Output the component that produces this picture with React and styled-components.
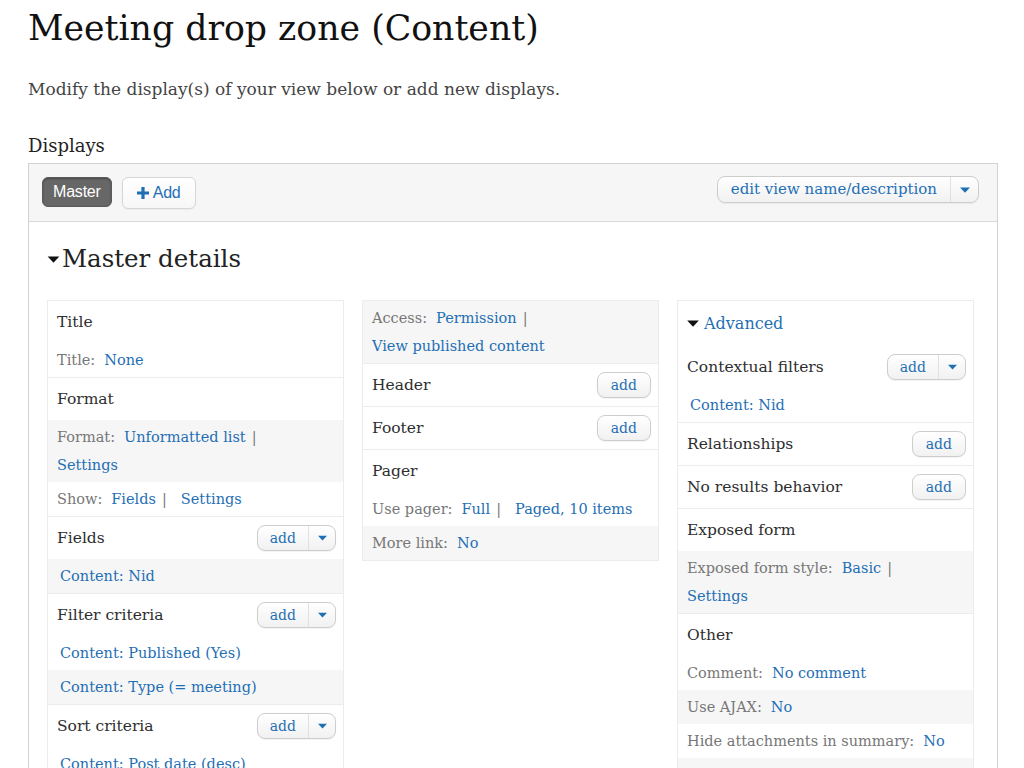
import React from 'react';
import styled, { createGlobalStyle } from 'styled-components';

const GlobalStyle = createGlobalStyle`
  html, body { margin: 0; padding: 0; background: #fff; }
  body {
    font-family: "DejaVu Serif", Georgia, serif;
    color: #333;
    -webkit-font-smoothing: antialiased;
  }
`;

const Page = styled.div`
  padding: 0 26px 0 28px;
  height: 768px;
  overflow: hidden;
`;

const Heading = styled.h1`
  margin: 0;
  padding-top: 6px;
  font-size: 34.7px;
  font-weight: normal;
  line-height: 44px;
  color: #111;
`;

const Intro = styled.p`
  margin: 27px 0 0;
  font-size: 17px;
  line-height: 24px;
  color: #444;
`;

const DisplaysLabel = styled.div`
  margin-top: 33px;
  font-size: 18px;
  line-height: 24px;
  color: #222;
`;

const Panel = styled.div`
  margin-top: 5px;
  border: 1px solid #d2d2d2;
  border-bottom: none;
`;

const TopBar = styled.div`
  display: flex;
  align-items: flex-start;
  height: 57px;
  padding: 0 18px 0 13px;
  background: #f6f6f6;
  border-bottom: 1px solid #d8d8d8;
`;

const Tab = styled.button`
  display: inline-flex;
  align-items: center;
  gap: 4px;
  margin-top: 13px;
  margin-right: 10px;
  height: ${p => (p.$active ? '30px' : '32px')};
  padding: 0 ${p => (p.$active ? '10px' : '14px')};
  border-radius: 6px;
  border: 1px solid ${p => (p.$active ? '#5a5a5a' : '#d6d6d6')};
  background: ${p => (p.$active ? '#676767' : 'linear-gradient(#ffffff, #f7f7f7)')};
  color: ${p => (p.$active ? '#fff' : '#1f6fb5')};
  font-family: "Liberation Sans", Arial, sans-serif;
  font-size: 16px;
  letter-spacing: -0.2px;
  box-shadow: ${p => (p.$active ? 'inset 0 1px 2px rgba(0,0,0,0.3)' : '0 1px 1px rgba(0,0,0,0.04)')};
  cursor: pointer;
`;

const Spacer = styled.div`
  flex: 1;
`;

const SplitButton = styled.div`
  display: inline-flex;
  align-items: stretch;
  margin-top: ${p => p.$mt || 0}px;
  height: ${p => p.$h || 24}px;
  border: 1px solid #cdcdcd;
  border-radius: 8px;
  background: linear-gradient(#ffffff, #f1f1f1);
  box-shadow: 0 1px 1px rgba(0,0,0,0.05);
  overflow: hidden;
  flex-shrink: 0;
`;

const SplitMain = styled.span`
  display: flex;
  align-items: center;
  padding: 0 ${p => p.$pad || 12}px;
  color: #1f6fb5;
  font-size: ${p => p.$fs || 14}px;
  line-height: 1;
`;

const SplitArrow = styled.span`
  display: flex;
  align-items: center;
  justify-content: center;
  width: ${p => p.$w || 26}px;
  border-left: 1px solid #e0e0e0;
`;

const Body = styled.div`
  padding: 0 25px 0 18px;
`;

const DetailsTitle = styled.h2`
  display: flex;
  align-items: center;
  gap: 2px;
  margin: 21px 0 25px;
  font-size: 24.5px;
  font-weight: normal;
  line-height: 32px;
  color: #222;
`;

const Columns = styled.div`
  display: grid;
  grid-template-columns: repeat(3, 297px);
  column-gap: 18px;
  align-items: start;
`;

const Column = styled.div`
  border: 1px solid #ececec;
  border-bottom: ${p => (p.$open ? 'none' : '1px solid #ececec')};
`;

const Section = styled.div`
  & + & {
    border-top: 1px solid #ececec;
  }
`;

const SectionHead = styled.div`
  display: flex;
  align-items: center;
  justify-content: space-between;
  height: ${p => p.$h || 42}px;
  padding: 0 7px 0 9px;
  font-size: 15.5px;
  line-height: 22px;
  color: #2e2e2e;
`;

const HeadLink = styled.span`
  display: flex;
  align-items: center;
  gap: 5px;
  color: #1f6fb5;
  font-size: 16px;
`;

const Item = styled.div`
  padding: 3px 9px 3px ${p => (p.$indent ? 12 : 9)}px;
  line-height: 28px;
  font-size: 14.5px;
  background: ${p => (p.$shade ? '#f6f6f6' : '#fff')};
  color: #777;
`;

const Link = styled.a`
  color: #1f6fb5;
  text-decoration: none;
`;

const Sep = styled.span`
  color: #777;
  padding: 0 ${p => (p.$wide ? 14 : 8)}px 0 6px;
`;

const Gap = styled.span`
  display: inline-block;
  width: ${p => p.$w || 9}px;
`;

const Caret = ({ color = '#1f6fb5', w = 10, h = 6 }) => (
  <svg width={w} height={h} viewBox="0 0 10 6" aria-hidden="true">
    <path d="M0 0.5 L10 0.5 L5 5.8 Z" fill={color} />
  </svg>
);

const Plus = () => (
  <svg width="12" height="12" viewBox="0 0 12 12" aria-hidden="true">
    <path d="M4.4 0 H7.6 V4.4 H12 V7.6 H7.6 V12 H4.4 V7.6 H0 V4.4 H4.4 Z" fill="#1f6fb5" />
  </svg>
);

const AddSplit = () => (
  <SplitButton>
    <SplitMain>add</SplitMain>
    <SplitArrow><Caret w={9} h={6} /></SplitArrow>
  </SplitButton>
);

const AddSingle = () => (
  <SplitButton>
    <SplitMain $pad={13}>add</SplitMain>
  </SplitButton>
);

const Pair = ({ label, children }) => (
  <>
    {label}:<Gap />{children}
  </>
);

export default function App() {
  return (
    <>
      <GlobalStyle />
      <Page>
        <Heading>Meeting drop zone (Content)</Heading>
        <Intro>Modify the display(s) of your view below or add new displays.</Intro>
        <DisplaysLabel>Displays</DisplaysLabel>
        <Panel>
          <TopBar>
            <Tab $active>Master</Tab>
            <Tab><Plus />Add</Tab>
            <Spacer />
            <SplitButton $mt={12} $h={25}>
              <SplitMain $pad={13} $fs={15}>edit view name/description</SplitMain>
              <SplitArrow $w={27}><Caret w={10} h={6} /></SplitArrow>
            </SplitButton>
          </TopBar>
          <Body>
            <DetailsTitle>
              <Caret color="#111" w={13} h={7} />
              Master details
            </DetailsTitle>
            <Columns>
              <Column $open>
                <Section>
                  <SectionHead>Title</SectionHead>
                  <Item><Pair label="Title"><Link>None</Link></Pair></Item>
                </Section>
                <Section>
                  <SectionHead>Format</SectionHead>
                  <Item $shade>
                    <Pair label="Format"><Link>Unformatted list</Link></Pair><Sep>|</Sep><br />
                    <Link>Settings</Link>
                  </Item>
                  <Item>
                    <Pair label="Show"><Link>Fields</Link></Pair><Sep $wide>|</Sep><Link>Settings</Link>
                  </Item>
                </Section>
                <Section>
                  <SectionHead>Fields<AddSplit /></SectionHead>
                  <Item $shade $indent><Link>Content: Nid</Link></Item>
                </Section>
                <Section>
                  <SectionHead>Filter criteria<AddSplit /></SectionHead>
                  <Item $indent><Link>Content: Published (Yes)</Link></Item>
                  <Item $shade $indent><Link>Content: Type (= meeting)</Link></Item>
                </Section>
                <Section>
                  <SectionHead>Sort criteria<AddSplit /></SectionHead>
                  <Item $indent><Link>Content: Post date (desc)</Link></Item>
                </Section>
              </Column>

              <Column>
                <Section>
                  <Item $shade>
                    <Pair label="Access"><Link>Permission</Link></Pair><Sep>|</Sep><br />
                    <Link>View published content</Link>
                  </Item>
                </Section>
                <Section>
                  <SectionHead>Header<AddSingle /></SectionHead>
                </Section>
                <Section>
                  <SectionHead>Footer<AddSingle /></SectionHead>
                </Section>
                <Section>
                  <SectionHead>Pager</SectionHead>
                  <Item>
                    <Pair label="Use pager"><Link>Full</Link></Pair><Sep $wide>|</Sep><Link>Paged, 10 items</Link>
                  </Item>
                  <Item $shade><Pair label="More link"><Link>No</Link></Pair></Item>
                </Section>
              </Column>

              <Column $open>
                <Section>
                  <SectionHead $h={45}>
                    <HeadLink><Caret color="#111" w={12} h={7} />Advanced</HeadLink>
                  </SectionHead>
                  <SectionHead>Contextual filters<AddSplit /></SectionHead>
                  <Item $indent><Link>Content: Nid</Link></Item>
                </Section>
                <Section>
                  <SectionHead>Relationships<AddSingle /></SectionHead>
                </Section>
                <Section>
                  <SectionHead>No results behavior<AddSingle /></SectionHead>
                </Section>
                <Section>
                  <SectionHead>Exposed form</SectionHead>
                  <Item $shade>
                    <Pair label="Exposed form style"><Link>Basic</Link></Pair><Sep>|</Sep><br />
                    <Link>Settings</Link>
                  </Item>
                </Section>
                <Section>
                  <SectionHead>Other</SectionHead>
                  <Item><Pair label="Comment"><Link>No comment</Link></Pair></Item>
                  <Item $shade><Pair label="Use AJAX"><Link>No</Link></Pair></Item>
                  <Item><Pair label="Hide attachments in summary"><Link>No</Link></Pair></Item>
                  <Item $shade><Pair label="Use aggregation"><Link>No</Link></Pair></Item>
                </Section>
              </Column>
            </Columns>
          </Body>
        </Panel>
      </Page>
    </>
  );
}
